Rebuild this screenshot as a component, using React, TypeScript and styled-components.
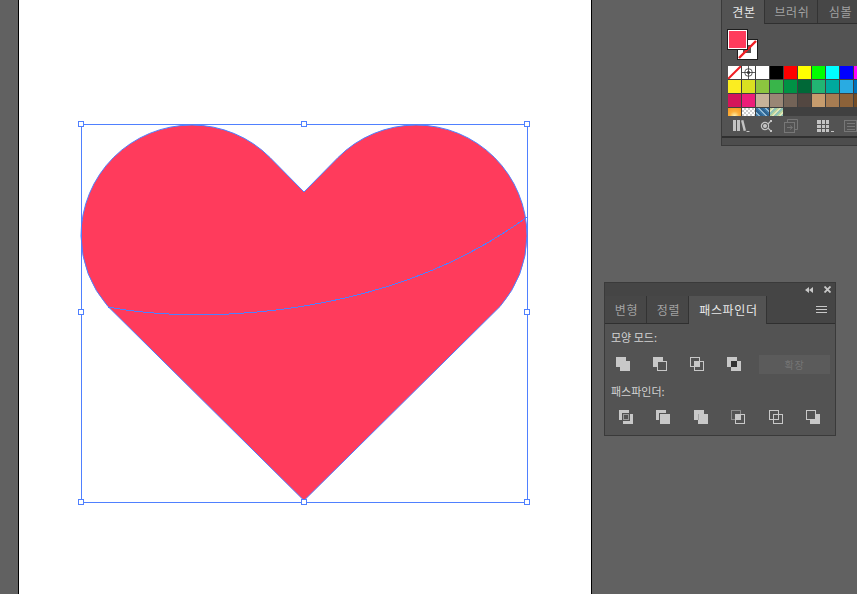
import React from "react";
import styled, { createGlobalStyle } from "styled-components";

const Global = createGlobalStyle`
  html, body { margin: 0; padding: 0; height: 100%; overflow: hidden; background: #616161; }
  #root { height: 594px; }
  * { box-sizing: border-box; }
`;

const Workspace = styled.div`
  position: relative;
  width: 857px;
  height: 594px;
  overflow: hidden;
  padding-left: 18px;
  background: #616161;
  font-family: "Noto Sans CJK KR", "Noto Sans", sans-serif;
  font-size: 12px;
`;

const Artboard = styled.main`
  width: 574px;
  height: 594px;
  background: #fff;
  border-left: 1px solid #000;
  border-right: 1px solid #000;
`;

const ArtSvg = styled.svg`
  display: block;
  margin-left: -19px;
  width: 592px;
  height: 594px;
`;

const FloatingPanel = styled.section<{ $x: number; $y: number; $w: number; $h: number }>`
  position: absolute;
  left: ${(p) => p.$x}px;
  top: ${(p) => p.$y}px;
  width: ${(p) => p.$w}px;
  height: ${(p) => p.$h}px;
  background: #535353;
  border: 1px solid #3a3a3a;
  display: flex;
  flex-direction: column;
`;

const TitleBar = styled.div`
  height: 13px;
  background: #454545;
  display: flex;
  align-items: center;
  justify-content: flex-end;
  gap: 11px;
  padding-right: 4px;
`;

const TabRow = styled.div<{ $h: number }>`
  height: ${(p) => p.$h}px;
  flex: none;
  display: flex;
  background: #454545;
  border-bottom: 1px solid #2f2f2f;
  align-items: stretch;
`;

const Tab = styled.div<{ $active?: boolean; $w: number }>`
  width: ${(p) => p.$w}px;
  flex: none;
  display: flex;
  align-items: center;
  justify-content: center;
  padding-left: 2px;
  letter-spacing: 0.7px;
  line-height: 1;
  color: ${(p) => (p.$active ? "#e8e8e8" : "#a2a2a2")};
  background: ${(p) => (p.$active ? "#535353" : "#474747")};
  border-right: 1px solid #333;
  margin-bottom: ${(p) => (p.$active ? "-1px" : "0")};
`;

const MenuSlot = styled.div`
  margin-left: auto;
  width: 27px;
  display: flex;
  align-items: center;
  justify-content: center;
`;

const SwatchBody = styled.div`
  flex: 1;
  min-height: 0;
  display: flex;
  flex-direction: column;
  padding: 5px 0 0 5px;
`;

const ColorWidget = styled.svg`
  display: block;
  flex: none;
  width: 32px;
  height: 32px;
`;

const SwatchGrid = styled.div`
  display: grid;
  flex: none;
  grid-template-columns: repeat(10, 13px);
  grid-template-rows: 13px 13px 13px 8px;
  gap: 1px;
  margin: 5px 0 0 1px;
  background: #404040;
  width: max-content;
`;

const Swatch = styled.div<{ $bg: string }>`
  background: ${(p) => p.$bg};
  overflow: hidden;
`;

const SwatchGlyph = styled.svg`
  display: block;
  width: 13px;
  height: 13px;
`;

const SwatchTools = styled.div`
  height: 16px;
  flex: none;
  margin-top: 2px;
  display: flex;
  align-items: center;
`;

const ToolIcon = styled.svg<{ $left: number }>`
  display: block;
  flex: none;
  margin-left: ${(p) => p.$left}px;
  width: 20px;
  height: 14px;
`;

const FootLine = styled.div`
  height: 2px;
  flex: none;
  background: #303030;
  margin-top: 1px;
`;

const Foot = styled.div`
  height: 7px;
  flex: none;
  background: #4d4d4d;
  display: flex;
  justify-content: flex-end;
  padding-right: 5px;
`;

const Grip = styled.div`
  width: 20px;
  height: 5px;
  background: repeating-linear-gradient(90deg, #2e2e2e 0 1px, transparent 1px 2px);
`;

const PathBody = styled.div`
  flex: 1;
  padding: 5px 5px 0 6px;
  color: #d2d2d2;
`;

const SectionLabel = styled.div`
  height: 16px;
  line-height: 16px;
  font-size: 11px;
`;

const ShapeRow = styled.div`
  display: flex;
  align-items: center;
  height: 20px;
  margin: 9px 0 9px;
`;

const OpRow = styled.div`
  display: flex;
  align-items: center;
  height: 16px;
  margin-top: 10px;
  padding-left: 8px;
  gap: 23.4px;
`;

const ShapeIcons = styled.div`
  display: flex;
  gap: 23px;
  padding-left: 5px;
`;

const OpIcon = styled.svg`
  display: block;
  flex: none;
  width: 14px;
  height: 14px;
`;

const ExpandButton = styled.div`
  width: 71px;
  height: 19px;
  margin-left: 18px;
  background: #5b5b5b;
  color: #757575;
  font-size: 10px;
  letter-spacing: 0.8px;
  display: flex;
  align-items: center;
  justify-content: center;
`;

const L = "#c8c8c8";
const D = "#535353";

const ops: Record<string, React.ReactNode> = {
  unite: (
    <>
      <rect x="0" y="0" width="10" height="10" fill={L} />
      <rect x="4" y="4" width="10" height="10" fill={L} />
    </>
  ),
  minus: (
    <>
      <rect x="0" y="0" width="10" height="10" fill={L} />
      <rect x="4.5" y="4.5" width="9" height="9" fill={D} stroke={L} />
    </>
  ),
  intersect: (
    <>
      <rect x="0.5" y="0.5" width="9" height="9" fill="none" stroke={L} />
      <rect x="4.5" y="4.5" width="9" height="9" fill="none" stroke={L} />
      <rect x="4" y="4" width="6" height="6" fill={L} />
    </>
  ),
  exclude: (
    <>
      <rect x="0" y="0" width="10" height="10" fill={L} />
      <rect x="4" y="4" width="10" height="10" fill={L} />
      <rect x="4" y="4" width="6" height="6" fill="#333" />
    </>
  ),
  divide: (
    <>
      <path d="M0 0H10V3H3V10H0Z" fill={L} />
      <rect x="4.5" y="4.5" width="5" height="5" fill="none" stroke="#9a9a9a" />
      <path d="M11 4H14V14H4V11H11Z" fill={L} />
    </>
  ),
  trim: (
    <>
      <path d="M0 0H10V3H3V10H0Z" fill={L} />
      <rect x="4" y="4" width="10" height="10" fill={L} />
    </>
  ),
  merge: (
    <>
      <path d="M0 0H10V4H4V10H0Z" fill={L} />
      <rect x="4" y="4" width="10" height="10" fill={L} />
      <path d="M4 4V10" stroke="#8a8a8a" strokeWidth="0.6" />
    </>
  ),
  crop: (
    <>
      <rect x="0.5" y="0.5" width="9" height="9" fill="none" stroke="#8c8c8c" />
      <rect x="4.5" y="4.5" width="9" height="9" fill={D} stroke={L} />
      <rect x="4" y="4" width="6" height="6" fill={L} />
    </>
  ),
  outline: (
    <>
      <rect x="0.5" y="0.5" width="9" height="9" fill="none" stroke={L} />
      <rect x="4.5" y="4.5" width="9" height="9" fill="none" stroke={L} />
    </>
  ),
  minusBack: (
    <>
      <rect x="4" y="4" width="10" height="10" fill={L} />
      <rect x="0.5" y="0.5" width="9" height="9" fill={D} stroke={L} />
    </>
  ),
};

const Op = ({ name }: { name: string }) => (
  <OpIcon viewBox="0 0 14 14" shapeRendering="crispEdges">
    {ops[name]}
  </OpIcon>
);

const row1 = ["none", "reg", "#ffffff", "#000000", "#ff0000", "#ffff00", "#00ff00", "#00ffff", "#0000ff", "#ff00ff"];
const row2 = ["#fbed21", "#d9e021", "#8cc63f", "#39b54a", "#009245", "#006837", "#22b573", "#00a99d", "#29abe2", "#0071bc"];
const row3 = ["#d4145a", "#ed1e79", "#c7b299", "#998675", "#736357", "#534741", "#c69c6d", "#a67c52", "#8c6239", "#754c24"];
const row4 = [
  "radial-gradient(circle at 50% 100%, #fff3b0 0, #fbb03b 45%, #f7931e 100%)",
  "repeating-conic-gradient(#cfcfcf 0 25%, #fff 0 50%) 0 0 / 4px 4px",
  "repeating-linear-gradient(45deg, #3b78a8 0 2px, #8fb8d4 2px 3px, #2f6491 3px 5px)",
  "repeating-linear-gradient(135deg, #b9d59a 0 2px, #e3e6b8 2px 3px, #8fc3b5 3px 5px)",
];

const SwatchCell = ({ c }: { c: string }) => {
  if (c === "none")
    return (
      <Swatch $bg="#fff">
        <SwatchGlyph viewBox="0 0 13 13">
          <path d="M0 13L13 0" stroke="#f01e23" strokeWidth="2" />
        </SwatchGlyph>
      </Swatch>
    );
  if (c === "reg")
    return (
      <Swatch $bg="#fff">
        <SwatchGlyph viewBox="0 0 13 13" fill="none" stroke="#333" strokeWidth="0.8">
          <circle cx="6.5" cy="6.5" r="3.8" />
          <path d="M0 6.5H13M6.5 0V13" />
          <circle cx="6.5" cy="6.5" r="1.2" fill="#333" />
        </SwatchGlyph>
      </Swatch>
    );
  return <Swatch $bg={c} />;
};

const handles = [
  [81, 124], [304, 124], [527, 124],
  [81, 312], [527, 312],
  [81, 502], [304, 502], [527, 502],
];

const HEART =
  "M304 500.5L108 306.5A111 111 0 0 1 81 236A111 111 0 0 1 192 125A111 111 0 0 1 270 157.5L304 192L338 157.5A111 111 0 0 1 416 125A111 111 0 0 1 527 236A111 111 0 0 1 500 306.5Z";

export default function App() {
  return (
    <>
      <Global />
      <Workspace>
        <Artboard>
          <ArtSvg viewBox="0 0 592 594">
            <path d={HEART} fill="#ff3b5c" stroke="#4f80ff" strokeWidth="1" />
            <path d="M108 307C200 325 390 318 527 217" fill="none" stroke="#4f80ff" strokeWidth="1" shapeRendering="crispEdges" />
            <rect x="81.5" y="124.5" width="446" height="378" fill="none" stroke="#4f80ff" strokeWidth="1" shapeRendering="crispEdges" />
            {handles.map(([x, y]) => (
              <rect key={`${x}-${y}`} x={x - 2.5} y={y - 2.5} width="5" height="5" fill="#fff" stroke="#4f80ff" strokeWidth="1" shapeRendering="crispEdges" />
            ))}
          </ArtSvg>
        </Artboard>

        <FloatingPanel $x={721} $y={-1} $w={180} $h={147}>
          <TabRow $h={24}>
            <Tab $active $w={43}>견본</Tab>
            <Tab $w={53}>브러쉬</Tab>
            <Tab $w={44}>심볼</Tab>
          </TabRow>
          <SwatchBody>
            <ColorWidget viewBox="0 0 32 32" shapeRendering="crispEdges">
              <rect x="10.5" y="10.5" width="20" height="20" fill="#fff" stroke="#1d1d1d" />
              <rect x="16" y="16" width="8" height="8" fill="#535353" />
              <path d="M12 29L29 12" stroke="#f01e23" strokeWidth="2.4" shapeRendering="auto" />
              <rect x="0.5" y="0.5" width="20" height="20" fill="#ff3b5c" stroke="#1d1d1d" />
              <rect x="1.5" y="1.5" width="18" height="18" fill="none" stroke="#fff" />
            </ColorWidget>
            <SwatchGrid>
              {[...row1, ...row2, ...row3].map((c, i) => (
                <SwatchCell key={i} c={c} />
              ))}
              {row4.map((c, i) => (
                <Swatch key={i} $bg={c} />
              ))}
            </SwatchGrid>
            <SwatchTools>
              <ToolIcon $left={5} viewBox="0 0 20 14" fill="#c4c4c4">
                <rect x="1" y="1" width="3" height="11" />
                <rect x="5" y="1" width="3" height="11" />
                <path d="M9 1.6L11.4 1L14 11.4L11.6 12Z" />
                <rect x="14.5" y="12" width="3" height="1" />
              </ToolIcon>
              <ToolIcon $left={8} viewBox="0 0 20 14" fill="none" stroke="#c4c4c4" strokeWidth="1.2">
                <circle cx="5" cy="7" r="3.6" />
                <circle cx="5" cy="7" r="1.4" fill="#c4c4c4" />
                <path d="M8 5L11 1.8M8 9L11 12.2" />
                <rect x="10" y="1" width="2" height="2" fill="#c4c4c4" stroke="none" />
                <rect x="10" y="11" width="2" height="2" fill="#c4c4c4" stroke="none" />
              </ToolIcon>
              <ToolIcon $left={4} viewBox="0 0 20 14" fill="none" stroke="#777" strokeWidth="1">
                <path d="M3.5 3.5V0.5H13.5V10.5H11" />
                <rect x="0.5" y="3.5" width="10" height="10" />
                <path d="M3 8.5H8M6 6.5L8.5 8.5L6 10.5" />
              </ToolIcon>
              <ToolIcon $left={13} viewBox="0 0 20 14" fill="#c4c4c4" shapeRendering="crispEdges">
                <rect x="0" y="1" width="12" height="12" />
                <path d="M4 1V13M8 1V13M0 5H12M0 9H12" stroke="#535353" strokeWidth="1" />
                <rect x="14" y="12" width="3" height="1" />
              </ToolIcon>
              <ToolIcon $left={7} viewBox="0 0 20 14" fill="none" stroke="#777" strokeWidth="1" shapeRendering="crispEdges">
                <rect x="0.5" y="1.5" width="12" height="11" />
                <path d="M2.5 4.5H10.5M2.5 7.5H10.5M2.5 10.5H10.5" />
              </ToolIcon>
            </SwatchTools>
          </SwatchBody>
          <FootLine />
          <Foot>
            <Grip />
          </Foot>
        </FloatingPanel>

        <FloatingPanel $x={604} $y={282} $w={232} $h={154}>
          <TitleBar>
            <svg width="8" height="6" viewBox="0 0 8 6" fill="#c8c8c8">
              <path d="M4 0V6L0 3ZM8 0V6L4 3Z" />
            </svg>
            <svg width="7" height="7" viewBox="0 0 7 7" stroke="#c8c8c8" strokeWidth="1.8">
              <path d="M0.5 0.5L6.5 6.5M6.5 0.5L0.5 6.5" />
            </svg>
          </TitleBar>
          <TabRow $h={28}>
            <Tab $w={42}>변형</Tab>
            <Tab $w={42}>정렬</Tab>
            <Tab $active $w={78}>패스파인더</Tab>
            <MenuSlot>
              <svg width="11" height="8" viewBox="0 0 11 8" stroke="#c8c8c8" strokeWidth="1" shapeRendering="crispEdges">
                <path d="M0 0.5H11M0 3.5H11M0 6.5H11" />
              </svg>
            </MenuSlot>
          </TabRow>
          <PathBody>
            <SectionLabel>모양 모드:</SectionLabel>
            <ShapeRow>
              <ShapeIcons>
                <Op name="unite" />
                <Op name="minus" />
                <Op name="intersect" />
                <Op name="exclude" />
              </ShapeIcons>
              <ExpandButton>확장</ExpandButton>
            </ShapeRow>
            <SectionLabel>패스파인더:</SectionLabel>
            <OpRow>
              <Op name="divide" />
              <Op name="trim" />
              <Op name="merge" />
              <Op name="crop" />
              <Op name="outline" />
              <Op name="minusBack" />
            </OpRow>
          </PathBody>
        </FloatingPanel>
      </Workspace>
    </>
  );
}
